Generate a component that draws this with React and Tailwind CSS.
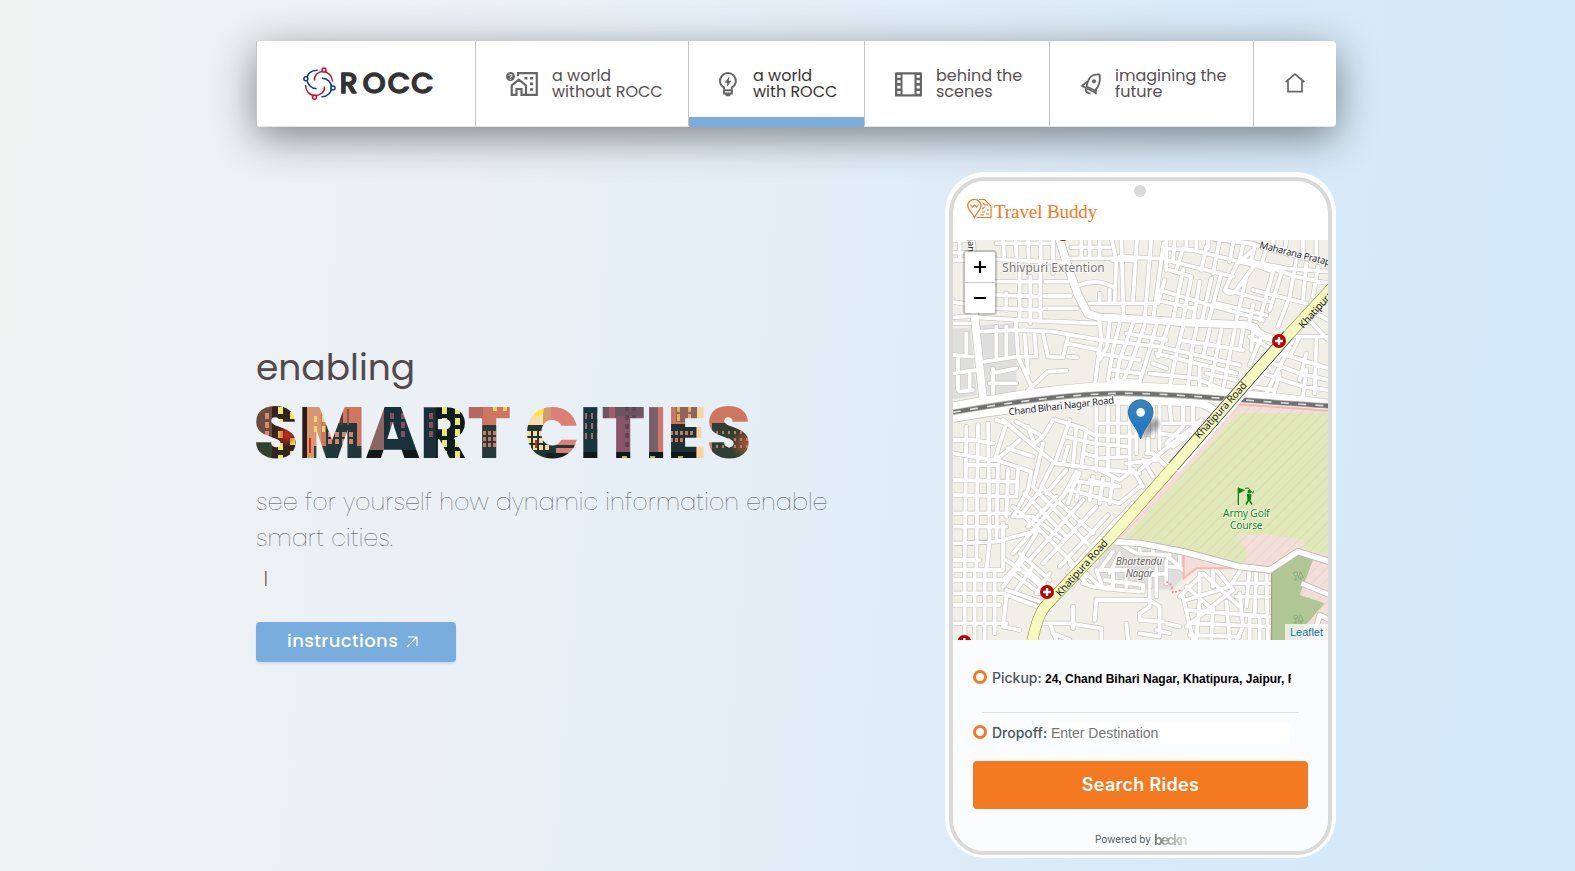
import React from "react";

const POP = "font-['Poppins','Inter',sans-serif]";

/* n streets joining edge a to edge b, evenly spread */
function rungs(a, b, n) {
  let d = "";
  for (let i = 0; i < n; i++) {
    const t = n === 1 ? 0 : i / (n - 1);
    const x1 = a[0] + (a[2] - a[0]) * t, y1 = a[1] + (a[3] - a[1]) * t;
    const x2 = b[0] + (b[2] - b[0]) * t, y2 = b[1] + (b[3] - b[1]) * t;
    d += `M${x1.toFixed(1)},${y1.toFixed(1)}L${x2.toFixed(1)},${y2.toFixed(1)}`;
  }
  return d;
}

const streets = [
  // north-west
  rungs([150, -5, 300, -5], [155, 66, 300, 66], 5),
  "M-5,0H50M-5,38H40M-5,185L55,195M0,232L60,228M130,10H300M128,58L345,68M128,125H255M130,165L262,170M130,205L265,210M70,232L200,240L430,250",
  "M200,66V240M232,110V250M262,66V240M160,160V210M275,205H372M275,168H352M278,125H345M300,68V100",
  "M355,22H470M350,55H500M380,135Q430,115 478,140M385,0V50M410,0V50M440,0V50M475,-5L490,60L485,185M505,-5L512,240M552,-5L540,180M595,-5L575,240M632,10L600,240M478,60H540M410,190H605M440,160V190M470,150V185",
  "M500,50L630,55M0,250H50M0,60H35M20,5V60",
  // north
  "M640,25L720,30L900,75M640,0V90M665,0L660,60M690,25L670,90M650,90L715,110M620,150L770,195L930,240M610,180L720,205M635,120L615,190M690,90L660,240M715,110L690,240M740,125L720,245M775,115L745,250M805,100L765,250M640,60L840,110M760,20L745,90M800,0L780,100",
  "M850,75L815,150Q830,170 850,150L905,75L960,95M850,75L900,30M960,95L920,240M985,100L950,210M900,150L1000,175L1060,190M880,110L850,240M930,75L1030,110L1125,130M1030,60L1010,170M1060,70L1050,180M1095,80L1080,170M1010,170L975,260M820,150L950,185M790,190L940,225M900,195L890,245",
  "M700,0V25M730,0V30M765,0V25M840,10L830,65M870,15L860,60M905,20L895,60M940,25L925,75M960,0V25M1000,0L995,35M1050,0V40M1090,0V45M870,60L1000,85L1125,95",
  // west, beside the grey blocks
  "M75,275L190,270L300,275L440,300M95,365L190,350L245,350M130,260V350M160,260V350M188,240L195,350L240,450M215,285L225,400M245,285L250,350M270,280L285,350M0,345L60,350M0,400L70,390M40,280V345M15,355V450M50,400V450M20,455L60,450M115,400L190,385M110,430L190,430M120,385V460",
  // between the main road and the railway
  "M215,460L285,395L340,392M285,350L330,352L345,290M330,352L340,310L440,330M345,350L372,352M440,245L445,300L435,360L425,440M470,245L462,320L440,360M500,250L480,330L465,420L480,440M540,250L500,360L490,420M575,255L545,340L510,425M610,255L590,330L560,425M645,260L615,350M445,300L620,320L860,375M435,340L560,360M480,420L560,425M480,390L560,400M520,280L640,300M690,260L670,340L650,440M730,265L715,340L705,440M770,268L750,350M805,270L790,345L770,440M845,270L825,370L810,450M610,340L850,400M600,370L640,385M590,400L730,415L800,445M680,300L870,330M740,380V450M870,270L860,330M900,270L895,330M760,400L800,410L850,420M890,290L960,330M925,290L890,375",
  // east of the main road
  "M985,340L1125,385M960,370L1040,400L1125,420M930,400L1050,440L1125,450M1010,320L985,370L940,460M1040,290L1010,350M1060,340L1040,420M1090,300L1085,460M1125,290L1010,290M1060,390L1050,470M980,400L960,470M1060,230L1125,300M1080,215L1125,240M890,440L960,450",
  // south-west
  "M150,540L305,670L470,690L560,700M190,545L270,590L300,540M270,590L245,610M125,660L160,550L130,540M305,670L330,600L350,540M225,560L240,600M310,540L390,565L430,590M200,600L130,660L235,695M165,625L240,650M340,590L420,610L530,620M370,560L360,680M400,570L385,680M345,620L330,670M390,640L430,650M430,490V690M465,500V690M495,490V650M530,490V690M430,550H530M430,585L550,590M430,655L520,650",
  "M550,500V640M585,595V640M600,640L580,640M620,495V625M650,500L655,545M690,495V545M720,500V545M620,550H740M600,495V590M620,580L690,590M760,545L660,620M745,540L560,690M690,560L640,610M520,670L610,660M600,640L640,680M570,660L600,710M540,690L570,740",
  "M0,640L120,660M0,600H60M0,720L190,725M0,765L180,770M0,820H170M0,860H160M0,910L130,905L260,870M40,560L35,990M75,555L70,990M105,550L110,905L100,990M135,670L130,905M165,690L160,830M195,690L190,770M235,695L225,750L180,830M270,610L240,740M0,960H80M0,990H150M40,675H130M0,1020H150L180,990L250,880M150,850V990M60,600L120,610",
  "M300,670L265,740L420,880M340,690L280,760M370,695L330,770M240,740L440,950M215,760L340,890M180,800L260,870L400,1010M380,700L360,740L345,790M190,830H240L330,900M270,740L200,830M310,770L225,860M345,750L180,940M390,780L230,960M430,800L270,970M465,825L320,980M500,790L350,750M490,840L345,1000M160,960L230,1010L300,1070M200,940L290,1020M410,720L500,740M390,760L500,790L560,740M380,730L370,780M420,710L410,780M450,715L440,790M480,715L470,790M375,725L490,740M440,690L500,720L540,690M540,790L380,960",
  "M160,1050L290,1095M150,1060L280,1110M180,1000L260,1060M200,970L280,1040M290,1000L250,1060M0,1060H150M0,1095H140M0,1150H135M35,1000V1200M65,1000V1200M95,990V1200M125,990V1180M160,1070L150,1160L200,1170M110,1150H160M210,960L150,1040M240,980L190,1050",
  "M250,1150L350,1150L445,1165V1200M360,1100V1165M390,1030Q440,1050 475,1040M290,1150L310,1200M300,1180L350,1200M400,1000L440,1040M520,1150L525,1200M560,1180L620,1190M350,970L400,1030",
  // Bhartendu Nagar
  "M430,990L450,1045L560,1055M480,935L440,990M490,905L550,940L640,945L690,990M600,910V940M560,905V935M650,920V945M680,935V980M440,990H520L590,1005L640,1000M500,940L470,1000M455,1020L570,1035V1055M590,990V1040M610,970V1070M640,960V1030M650,980L690,985M480,1000V1045M520,1000V1040",
  "M430,1080L425,1140M430,1080H590L620,1100M590,1050V1100L560,1120V1140L630,1145M620,1100V1180M640,1150L680,1160M610,1170L650,1180",
  // south-east
  "M680,1070L750,1000L860,1100M700,1040L780,1110M740,1000V1060M790,990L840,1050L700,1160M870,980L830,1040L700,1080M690,1070L720,1200M780,990V1040M740,1080L730,1200M780,1100L775,1200M820,1085L830,1200M860,1060L870,1160L850,1200M700,1110L950,1130M720,1150L950,1160M890,980L880,1100M910,985L905,1130M940,990L945,1200M840,1030H950M850,1070H950M710,1185L860,1190M890,1130V1200M920,1130V1200",
].join("");

const collectors =
  "M318,-5L345,80L375,165L405,222L440,232L600,240L700,248L880,255L905,262Q915,290 980,300M55,-5L62,200L82,400L92,490M0,535C150,507 300,490 480,482L650,485L730,488Q775,495 800,530";
const lane = "M780,-5L900,12L960,30L1125,70";
const eastern = "M480,905L560,910L690,935L860,980L950,990L1035,935L1130,965";
const highway = "M1140,140L1015,275L900,405L650,692L480,885L280,1095Q252,1125 236,1215";
const rail = "M0,517C150,490 350,462 500,460S900,485 1130,498";

function Hospital({ x, y }) {
  return (
    <g transform={`translate(${x} ${y})`}>
      <circle r="21" fill="#bf0000" />
      <path d="M-12,0H12M0,-12V12" stroke="#fff" strokeWidth="7" />
    </g>
  );
}

function Tree({ x, y }) {
  return (
    <g transform={`translate(${x} ${y})`} fill="none" stroke="#85a777" strokeWidth="2.5">
      <circle cx="-7" cy="-5" r="6" />
      <path d="M-7,1V13M-12,13H-2M8,-12L0,7H16ZM8,7V13M4,13H13" />
    </g>
  );
}

function CityMap() {
  const halo = { paintOrder: "stroke", strokeLinejoin: "round" };
  return (
    <svg viewBox="0 0 1125 1200" className="block h-[400px] w-[375px]" fontFamily="'Noto Sans','Open Sans',sans-serif">
      <defs>
        <pattern id="hatch" width="24" height="24" patternUnits="userSpaceOnUse" patternTransform="rotate(45)">
          <path d="M0,0V24" stroke="#f1a79c" strokeWidth="2" opacity=".75" />
        </pattern>
        <linearGradient id="pin" x1="0" y1="0" x2="0" y2="1">
          <stop offset="0" stopColor="#3a83bd" />
          <stop offset="1" stopColor="#1a76c8" />
        </linearGradient>
        <filter id="soft"><feGaussianBlur stdDeviation="6" /></filter>
      </defs>
      <rect width="1125" height="1200" fill="#f2efe9" />
      <path d="M0,265H52L72,465L0,478ZM78,255L180,250L192,275L190,455L105,465Z" fill="#dfdfdf" />
      <path d="M470,915L700,940L690,1010L660,1050L460,1040L425,985Z" fill="#dfdedd" />
      <g fill="none" strokeLinejoin="round">
        <path d={streets} stroke="#c9c7c1" strokeWidth="15.5" strokeLinecap="round" />
        <path d={lane} stroke="#b5b3ae" strokeWidth="17" />
        <path d={collectors} stroke="#c2c0bb" strokeWidth="27" />
        <path d="M0,498C180,465 380,432 540,438S960,468 1130,490" stroke="#c9c7c1" strokeWidth="26" />
        <path d={streets} stroke="#fff" strokeWidth="11.500" strokeLinecap="round" />
        <path d={lane} stroke="#fff" strokeWidth="13" />
        <path d={collectors} stroke="#fff" strokeWidth="23" />
        <path d="M0,498C180,465 380,432 540,438S960,468 1130,490" stroke="#fff" strokeWidth="22" />
        <path d={rail} stroke="#fff" strokeWidth="28" />
        <path d={rail} stroke="#b4b4ae" strokeWidth="17" />
        <path d={rail} stroke="#707070" strokeWidth="12" />
        <path d={rail} stroke="#dcdcdc" strokeWidth="5" strokeDasharray="24 28" />
      </g>
      <path d="M845,488L1125,508V1200H955V990L860,980L690,935L485,898L660,700Z" fill="#f2dfda" />
      <path d="M690,937L860,982L725,988L692,1015Z" fill="#f2dfda" />
      <path d="M855,520H1125V945L1052,925L1054,900L930,882L852,886L884,940L872,978L690,925L518,890Z" fill="#dfe8b8" />
      <path d="M1030,940L1080,960L1040,1065L1115,1090L1050,1165V1200H955V1000Z" fill="#aec795" />
      <path d="M845,488L1125,508V1200H955V990L860,980L690,935L485,898L660,700Z" fill="url(#hatch)" />
      <path d="M692,940V1015L730,985L850,985M845,492L1125,512M480,895L660,700" fill="none" stroke="#f6a8a2" strokeWidth="6" opacity=".75" />
      <path d="M956,1000V1200" stroke="#ad9175" strokeWidth="3" />
      <path d="M640,1025L655,1035L660,1058L685,1050" fill="none" stroke="#f08c85" strokeWidth="5" strokeDasharray="6 6" />
      <g fill="none" strokeLinejoin="round">
        <path d={eastern} stroke="#bcb8b2" strokeWidth="22" />
        <path d="M1045,1030L1130,1065M1085,1180L1100,1125L1130,1140" stroke="#bcb8b2" strokeWidth="18" />
        <path d={eastern} stroke="#fff" strokeWidth="17" />
        <path d="M1045,1030L1130,1065M1085,1180L1100,1125L1130,1140" stroke="#fff" strokeWidth="14" />
        <path d={highway} stroke="#8e9040" strokeWidth="34" />
        <path d="M1008,290L900,410L660,683" stroke="#fff" strokeWidth="45" />
        <path d="M1005,286L900,405L660,680" stroke="#444" strokeWidth="36" />
        <path d={highway} stroke="#f7fabf" strokeWidth="31" />
      </g>
      <Hospital x="282" y="1056" />
      <Hospital x="978" y="303" />
      <Hospital x="34" y="1206" />
      <Hospital x="330" y="-18" />
      <Tree x="1035" y="1007" />
      <Tree x="1035" y="1136" />
      <g stroke="#fff" strokeWidth="5" fill="#222" style={halo}>
        <text transform="translate(45,-22) rotate(90)" fontSize="28">Ajan</text>
        <text transform="translate(168,526) rotate(-6.5)" fontSize="29" textLength="318">Chand Bihari Nagar Road</text>
        <text transform="translate(918,24) rotate(14)" fontSize="29" textLength="220">Maharana Pratap</text>
      </g>
      <g fill="#222" fontSize="31">
        <text transform="translate(739,598) rotate(-48)" textLength="216">Khatipura Road</text>
        <text transform="translate(322,1071) rotate(-48)" textLength="216">Khatipura Road</text>
        <text transform="translate(1051,267) rotate(-48)" textLength="216">Khatipura Road</text>
      </g>
      <g stroke="#fff" strokeWidth="5" strokeOpacity=".7" style={halo}>
        <text x="148" y="96" fontSize="35.500" fill="#777" textLength="307">Shivpuri Extention</text>
        <g textAnchor="middle" fontSize="31">
          <text x="558" y="975" fontStyle="italic" fill="#666" textLength="140">Bhartendu</text>
          <text x="559" y="1011" fontStyle="italic" fill="#666" textLength="82">Nagar</text>
          <text x="880" y="831" fill="#0e8517" textLength="140">Army Golf</text>
          <text x="880" y="867" fill="#0e8517" textLength="98">Course</text>
        </g>
      </g>
      <g stroke="#0e8517" fill="none" strokeWidth="4">
        <path d="M856,744V795" />
        <path d="M857,745L872,751L857,759Z" fill="#0e8517" />
        <circle cx="889" cy="755" r="3.5" fill="#0e8517" />
        <path d="M876,745L886,744L899,760L902,752" strokeWidth="3" />
        <path d="M890,764L888,778L897,794M888,777L879,794" strokeWidth="5" />
        <path d="M884,764L893,764L892,778L885,778Z" fill="#0e8517" />
      </g>
      <path d="M565,595L582,550Q600,525 620,545Q622,570 565,595" fill="#000" opacity=".35" filter="url(#soft)" />
      <path d="M563,597C551,559 526,544 526,516A37,37 0 0 1 600,516C600,544 575,559 563,597Z" fill="url(#pin)" stroke="#2b6da5" strokeWidth="3" />
      <circle cx="563" cy="517" r="13" fill="#fff" />
    </svg>
  );
}

function RoccLogo() {
  return (
    <svg viewBox="0 0 33 33" className="h-[33px] w-[33px]" fill="none" strokeWidth="1.500">
      <g stroke="#c8102e">
        <path d="M11.500,13.500C11,8 15,4.500 20,4.500C25,4.500 29.500,9 29.500,14.500" />
        <circle cx="21" cy="2.900" r="2" fill="#fff" />
        <path d="M2.500,18C2.500,24 6.500,28.500 12,28.500C17.500,28.500 22,25 21.500,19.500" />
        <circle cx="11.500" cy="30.200" r="2" fill="#fff" />
      </g>
      <g stroke="#0a3d91">
        <path d="M14.500,3.300C8,3 4,7 4,12C4,17.500 8,21.500 13.500,21.800" />
        <circle cx="2.900" cy="11.700" r="2" fill="#fff" />
        <path d="M19,11.300C25,11.500 28.500,15.500 28.500,20.500C28.500,26 24,30 18.500,29.800" />
        <circle cx="30" cy="21" r="2" fill="#fff" />
      </g>
    </svg>
  );
}

function HomeWorkIcon() {
  return (
    <svg viewBox="0 0 33 26" className="h-[26px] w-[33px]" fill="none" stroke="#666" strokeWidth="2.200">
      <path d="M12,5V2.200H30.800V23.800H20.500" />
      <path d="M5.700,14.500L12.800,8.700L20,14.500V23.800H15.500V18H10.500V23.800H5.700Z" />
      <path d="M18.500,7.300H21.500M24,7.300H27M24,12.900H27M24,18.500H27" strokeWidth="2.600" />
      <circle cx="4.500" cy="5.600" r="4.500" fill="#666" stroke="none" />
      <text x="2.600" y="8.500" fontSize="7.500" fontWeight="700" fill="#ddd" stroke="none" fontFamily="Inter,sans-serif">?</text>
    </svg>
  );
}

function BulbIcon() {
  return (
    <svg viewBox="0 0 20 26" className="h-[26px] w-[20px]" fill="none" stroke="#666" strokeWidth="2">
      <path d="M6,18.500V16.500C3.200,15 2,12.800 2,10A7.900,7.900 0 0 1 17.800,10C17.800,12.800 16.500,15 13.800,16.500V18.500" />
      <path d="M5,19.200H14.800M6,19V22.500H13.800V19M7.500,24.200H12.300" />
      <path d="M11.300,5.500L6.500,11.800H9.300L8.800,16L13.500,9.700H10.800Z" fill="#666" stroke="none" />
    </svg>
  );
}

function FilmIcon() {
  return (
    <svg viewBox="0 0 27 25" className="h-[25px] w-[27px]">
      <rect x="0" y="0.300" width="27" height="24.200" rx="1" fill="#666" />
      <rect x="7.500" y="2.500" width="12" height="19.800" fill="#fff" />
      <g fill="#fff">
        <path d="M2.300,3h3.200v2.700h-3.200zM2.300,8.300h3.200v2.700h-3.200zM2.300,13.700h3.200v2.700h-3.200zM2.300,19h3.200v2.700h-3.200z" />
        <path d="M21.600,3h3.200v2.700h-3.200zM21.600,8.300h3.200v2.700h-3.200zM21.600,13.700h3.200v2.700h-3.200zM21.600,19h3.200v2.700h-3.200z" />
      </g>
    </svg>
  );
}

function RocketIcon() {
  return (
    <svg viewBox="0 0 20 22" className="h-[22px] w-[20px]" fill="none" stroke="#666" strokeWidth="1.900" strokeLinejoin="round">
      <path d="M18.500,1.500C12,0.800 8,4 6.500,9.500L5.500,13.500L14,17.500C17.500,14 19.800,9 18.500,1.500Z" />
      <path d="M6.500,8.500L1,13L14,19.500L14.800,20.500L15,16" />
      <path d="M4.500,15.500Q4.500,20 9.500,20.500" />
      <circle cx="13" cy="8.300" r="1.800" fill="#666" strokeWidth="0.600" />
    </svg>
  );
}

function HomeIcon() {
  return (
    <svg viewBox="0 0 20 20" className="h-[20px] w-[20px]" fill="none" stroke="#666" strokeWidth="1.700">
      <path d="M0.700,9L10,1.200L19.300,9" />
      <path d="M3,8V18.600H17V8" />
    </svg>
  );
}

function Windows({ x, y, cols, rows, dx, dy, w, h, fill }) {
  const items = [];
  for (let r = 0; r < rows; r++)
    for (let c = 0; c < cols; c++)
      items.push(<rect key={`${r}-${c}`} x={x + c * dx} y={y + r * dy} width={w} height={h} fill={fill} />);
  return <>{items}</>;
}

function CityTitle() {
  return (
    <svg viewBox="0 0 500 60" className="block h-[60px] w-[500px]">
      <defs>
        <clipPath id="title">
          <text x="-2.500" y="54" fontFamily="Poppins,Inter,sans-serif" fontWeight="800" fontSize="72">SMART CITIES</text>
        </clipPath>
        <radialGradient id="glow"><stop offset="0" stopColor="#d3261d" /><stop offset="1" stopColor="#d3261d" stopOpacity="0" /></radialGradient>
        <radialGradient id="ember"><stop offset="0" stopColor="#a8552c" /><stop offset="1" stopColor="#a8552c" stopOpacity="0" /></radialGradient>
      </defs>
      <g clipPath="url(#title)">
        <rect width="500" height="60" fill="#cf7660" />
        {/* S */}
        <rect width="16" height="60" fill="#6b4a3f" />
        <rect y="34" width="46" height="26" fill="#34402f" />
        <rect x="16" width="27" height="60" fill="#33251e" />
        <Windows x={9} y={9} cols={1} rows={3} dx={9} dy={9} w={4} h={6} fill="#d98a6c" />
        <Windows x={22} y={3} cols={1} rows={5} dx={12} dy={12} w={5} h={7} fill="#e9ea6a" />
        <Windows x={34} y={8} cols={1} rows={4} dx={12} dy={13} w={5} h={7} fill="#e9ea6a" />
        <circle cx="31" cy="31" r="12" fill="url(#glow)" />
        {/* M */}
        <rect x="46" width="5" height="60" fill="#2a1d19" />
        <rect x="51" width="14" height="60" fill="#d99670" />
        <rect x="58" y="42" width="50" height="18" fill="#34402f" />
        <rect x="70" y="19" width="31" height="41" fill="#20383a" />
        <Windows x={72} y={28} cols={4} rows={2} dx={7} dy={7} w={4} h={5} fill="#d9826a" />
        <Windows x={58} y={12} cols={2} rows={2} dx={8} dy={10} w={3} h={6} fill="#e8dc68" />
        <rect x="84" y="7" width="3" height="14" fill="#5c3b38" /><rect x="91" y="5" width="2" height="16" fill="#8a544b" />
        <rect x="53" y="34" width="2" height="15" fill="#d3261d" />
        {/* A R */}
        <rect x="101" y="44" width="30" height="16" fill="#253636" />
        <path d="M108,46L130,0H138V60H108Z" fill="#8c6560" />
        <rect x="128" width="44" height="60" fill="#16313a" />
        <rect x="108" y="46" width="60" height="14" fill="#11181c" />
        <Windows x={134} y={9} cols={2} rows={3} dx={11} dy={9} w={4} h={6} fill="#824f61" />
        <rect x="172" width="8" height="60" fill="#1d3038" />
        <rect x="180" width="30" height="60" fill="#101a20" />
        <Windows x={173} y={9} cols={1} rows={3} dx={11} dy={9} w={4} h={6} fill="#824f61" />
        <Windows x={186} y={3} cols={2} rows={5} dx={13} dy={11} w={5} h={7} fill="#e9ea6a" />
        {/* T */}
        <rect x="213" width="14" height="20" fill="#b36b60" />
        <rect x="224" y="21" width="22" height="40" fill="#243b3a" />
        <Windows x={227} y={27} cols={3} rows={3} dx={5} dy={6} w={3} h={4} fill="#cf7660" />
        <Windows x={237} y={1} cols={2} rows={1} dx={10} dy={9} w={4} h={6} fill="#e8d45a" />
        {/* C */}
        <rect x="270" width="17" height="60" fill="#f9e0a4" />
        <rect x="287" width="8" height="60" fill="#d29a70" />
        <rect x="295" width="28" height="60" fill="#dd7f76" />
        <circle cx="281" cy="5" r="7" fill="#fbe637" />
        <rect x="270" y="21" width="30" height="40" fill="#1f3634" />
        <Windows x={271} y={27} cols={4} rows={3} dx={6} dy={7} w={4} h={5} fill="#f5dba0" />
        <rect x="290" y="49" width="33" height="11" fill="#16211f" />
        <rect x="300" y="41" width="20" height="3" fill="#20383a" />
        <rect x="279" y="36" width="2" height="8" fill="#d3261d" />
        {/* I T I */}
        <rect x="325" width="18" height="60" fill="#16353c" />
        <Windows x={329} y={9} cols={3} rows={3} dx={6} dy={10} w={2} h={6} fill="#a86a6b" />
        <rect x="344" width="49" height="60" fill="#6a5660" />
        <rect x="353" width="6" height="60" fill="#a85b69" />
        <rect x="360" y="12" width="28" height="48" fill="#875468" />
        <Windows x={369} y={2} cols={2} rows={5} dx={7} dy={9} w={4} h={5} fill="#614455" />
        <rect x="390" width="12" height="60" fill="#77606a" />
        <rect x="402" width="8" height="60" fill="#cd766e" />
        {/* E S */}
        <rect x="412" y="20" width="28" height="40" fill="#1b3433" />
        <rect x="420" width="22" height="18" fill="#8e6360" />
        <rect x="441" y="0" width="7" height="60" fill="#f3d59d" />
        <Windows x={414} y={27} cols={5} rows={2} dx={5} dy={7} w={3} h={4} fill="#cf7660" />
        <Windows x={421} y={1} cols={2} rows={2} dx={11} dy={9} w={3} h={7} fill="#e8b05a" />
        <rect x="456" y="19" width="40" height="41" fill="#2f4033" />
        <circle cx="490" cy="40" r="16" fill="url(#ember)" />
        <Windows x={460} y={27} cols={6} rows={3} dx={6} dy={7} w={2} h={3} fill="#cf7660" />
        <rect x="325" y="48" width="115" height="12" fill="#11181c" />
        <Windows x={366} y={52} cols={3} rows={1} dx={28} dy={5} w={5} h={3} fill="#b9b84e" />
      </g>
    </svg>
  );
}

function BuddyIcon() {
  return (
    <svg viewBox="0 0 25 21" className="h-[21px] w-[25px]" fill="none" stroke="#f47a21" strokeWidth="1.200">
      <path d="M7.500,19.500C5,14 0.700,12 0.700,7.200A6.700,6.700 0 0 1 14,7.200C14,12 10,14 7.500,19.500Z" />
      <path d="M3.500,6.500L5.500,9L7.500,7L9.500,9L11.500,6.500" />
      <path d="M12,1.500H17.500L21.500,5.500L24,8V19.500H10M15,11L18,9M15,14H18M20,12H22M13,17H17M19,16H22M16,5L18,7H21" />
    </svg>
  );
}

function NavItem({ width, icon, gap, pad, lines, active }) {
  return (
    <a className={`relative flex h-full items-start border-l border-[#c4c4c4] ${width} ${pad}`}>
      {icon}
      {lines && (
        <span className={`${gap} ${POP} text-[16px] font-normal leading-[16px] ${active ? "text-[#3a3436]" : "text-[#565052]"}`}>
          <span className="block pt-[27px]">{lines[0]}</span>
          <span className="block">{lines[1]}</span>
        </span>
      )}
      {active && <span className="absolute inset-x-0 bottom-[-1px] h-[10px] bg-[#78addd]" />}
    </a>
  );
}

export default function App() {
  return (
    <div className="h-[871px] w-[1575px] overflow-hidden bg-[linear-gradient(95deg,#f1f2f2_0%,#e6eff7_45%,#d9eaf8_72%,#d3e9fa_100%)]">
      <div className="ml-[256px] w-[1080px] pt-[41px]">
        <header className="flex h-[86px] rounded-[4px] border-b border-[#e6e6e6] bg-white shadow-[0_10px_40px_rgba(0,0,0,0.46)]">
          <div className="flex w-[219px] items-start border-l border-[#c4c4c4] pl-[46px] pt-[26px]">
            <RoccLogo />
            <svg viewBox="0 0 96 34" className="ml-[5px] h-[34px] w-[96px]">
              <text x="-1.500 21.800 46.700 70.200" y="25.700" fontFamily="Poppins,Lato,sans-serif" fontWeight="500" fontSize="29" fill="#333" stroke="#333" strokeWidth="1.400" strokeLinejoin="round">ROCC</text>
            </svg>
          </div>
          <NavItem width="w-[213px]" pad="pl-[30px]" gap="ml-[13px]" icon={<span className="pt-[30px]"><HomeWorkIcon /></span>} lines={["a world", "without ROCC"]} />
          <NavItem width="w-[176px]" pad="pl-[29px]" gap="ml-[15px]" active icon={<span className="pt-[30px]"><BulbIcon /></span>} lines={["a world", "with ROCC"]} />
          <NavItem width="w-[185px]" pad="pl-[30px]" gap="ml-[14px]" icon={<span className="pt-[31px]"><FilmIcon /></span>} lines={["behind the", "scenes"]} />
          <NavItem width="w-[204px]" pad="pl-[31px]" gap="ml-[14px]" icon={<span className="pt-[32px]"><RocketIcon /></span>} lines={["imagining the", "future"]} />
          <NavItem width="w-[83px]" pad="pl-[31px]" icon={<span className="pt-[32px]"><HomeIcon /></span>} />
        </header>

        <main className="flex">
          <section className={`w-[689px] pt-[214px] ${POP}`}>
            <h2 className="h-[63px] text-[36px] font-normal leading-[54px] text-[#504a4c]">enabling</h2>
            <CityTitle />
            <p className="w-[640px] pt-[20px] text-[24px] font-thin leading-[36px] text-[#4a4446]">
              see for yourself how dynamic information enable
              <br />
              smart cities.
            </p>
            <div className="ml-[9px] mt-[15px] h-[15px] w-[2px] border-r border-[#8fa9cf] bg-[#a86a4d]" />
            <button className="mt-[36px] flex h-[40px] w-[200px] items-start rounded-[4px] bg-[#78addd] pl-[31px] pt-[5px] text-[18px] font-medium leading-[27px] tracking-[0.400px] text-white shadow-[0_2px_2px_rgba(160,205,240,0.4)]">
              instructions
              <svg viewBox="0 0 12 12" className="ml-[8px] mt-[9px] h-[12px] w-[12px]" fill="none" stroke="#fff" strokeWidth="1.100">
                <path d="M1,11L11,1M2,1H11V10" />
              </svg>
            </button>
          </section>

          <section className="mt-[45px] h-[686px] w-[391px] rounded-[40px] border-x-[4px] border-b-[3px] border-t-[5px] border-white bg-white">
            <div className="h-[678px] w-[383px] overflow-hidden rounded-[36px] border-4 border-[#d9d9d9] bg-white font-['Inter',sans-serif]">
              <div className="flex h-[59px] flex-col pl-[14px]">
                <span className="ml-[167px] mt-[4px] h-[12px] w-[12px] shrink-0 rounded-full bg-[#d9d9d9]" />
                <div className="mt-px flex items-start">
                  <BuddyIcon />
                  <span className="ml-[2px] mt-[2px] font-['Liberation_Serif',serif] text-[19px] leading-[23px] tracking-[-0.100px] text-[#f47a21]">Travel Buddy</span>
                </div>
              </div>
              <div className="relative h-[400px]">
                <CityMap />
                <div className="absolute left-[10px] top-[10px] flex w-[34px] flex-col rounded-[4px] border-2 border-black/20 bg-clip-padding">
                  <span className="flex h-[31px] items-center justify-center rounded-t-[2px] border-b border-[#ccc] bg-white">
                    <svg viewBox="0 0 12 12" className="h-[12px] w-[12px]"><path d="M0,6H12M6,0V12" stroke="#000" strokeWidth="2.200" /></svg>
                  </span>
                  <span className="flex h-[30px] items-center justify-center rounded-b-[2px] bg-white">
                    <svg viewBox="0 0 12 12" className="h-[12px] w-[12px]"><path d="M0,6H12" stroke="#000" strokeWidth="2" /></svg>
                  </span>
                </div>
                <span className="absolute bottom-0 right-0 h-[16px] w-[43px] bg-white/70 pl-[5px] font-['Liberation_Sans',sans-serif] text-[11px] leading-[16px] text-[#0078a8]">Leaflet</span>
              </div>
              <div className="h-[208px] bg-[#fbfcff] pl-[20px] pt-[27px]">
                <div className="flex h-[22px] items-center">
                  <span className="mt-[-2px] h-[14px] w-[14px] rounded-full border-3 border-[#f47a21]" />
                  <span className="ml-[5px] mt-[-2px] w-[53px] text-[14px] font-medium text-[#4a5560]">Pickup:</span>
                  <span className="w-[246px] overflow-hidden whitespace-nowrap pt-px font-['Liberation_Sans',sans-serif] text-[12px] font-bold leading-[22px] text-black">24, Chand Bihari Nagar, Khatipura, Jaipur, Rajasthan</span>
                </div>
                <div className="ml-[9px] mt-[23px] h-px w-[317px] bg-[#dfe2e8]" />
                <div className="mt-[9px] flex h-[22px] items-center">
                  <span className="mt-[-2px] h-[14px] w-[14px] rounded-full border-3 border-[#f47a21]" />
                  <span className="ml-[5px] mt-[-2px] w-[55px] text-[14px] font-medium text-[#4a5560]">Dropoff:</span>
                  <span className="h-[22px] w-[243px] rounded-[4px] bg-white pl-[4px] font-['Liberation_Sans',sans-serif] text-[14px] leading-[22px] text-[#757575]">Enter Destination</span>
                </div>
                <button className="mt-[17px] block h-[48px] w-[335px] rounded-[4px] bg-[#f47a21] text-center text-[18px] font-semibold leading-[48px] tracking-[0.300px] text-white">Search Rides</button>
                <div className="mt-[20px] flex h-[20px] items-center pl-[122px] text-[10px] text-[#4f5b66]">
                  Powered by
                  <span className="ml-[3px] bg-[linear-gradient(90deg,#7c7c76,#b4b4ac_50%,#dcdcd4)] bg-clip-text pr-[2px] text-[14px] font-bold tracking-[-2.100px] text-transparent">beckn</span>
                </div>
              </div>
            </div>
          </section>
        </main>
      </div>
    </div>
  );
}
